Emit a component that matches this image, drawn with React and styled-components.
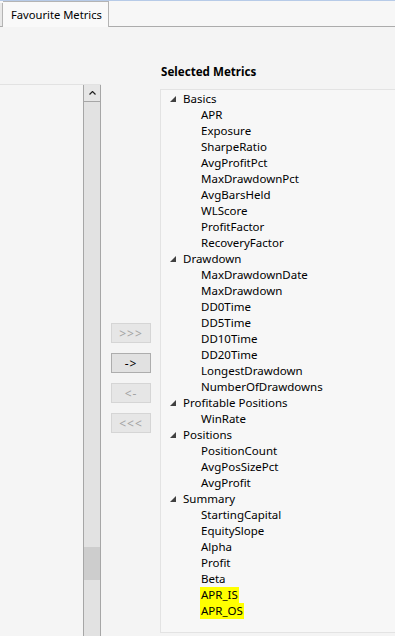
import React from 'react';
import styled, { createGlobalStyle } from 'styled-components';

const GlobalStyle = createGlobalStyle`
  html, body, #root {
    height: 100%;
    margin: 0;
  }
  body {
    background: #f4f4f4;
    font-family: "Noto Sans", "Open Sans", sans-serif;
    font-size: 11.5px;
    color: #000;
    overflow: hidden;
  }
`;

const Page = styled.div`
  height: 100%;
  display: flex;
  flex-direction: column;
`;

const TabStrip = styled.div`
  display: flex;
  height: 27px;
  box-sizing: border-box;
  border-top: 1px solid #b7cbe8;
  background: #f7f7f7;
`;

const TabStub = styled.div`
  width: 2px;
  margin-top: 2px;
  border-right: 1px solid #b4b4b4;
  border-bottom: 1px solid #acacac;
  background: #e8e8e8;
`;

const Tab = styled.div`
  width: 106px;
  box-sizing: border-box;
  border: 1px solid #b4b4b4;
  border-left: none;
  border-bottom: none;
  background: #f9f9f9;
  display: flex;
  align-items: center;
  padding-left: 8px;
  white-space: nowrap;
  font-size: 11.2px;
`;

const TabFiller = styled.div`
  flex: 1;
  border-bottom: 1px solid #acacac;
`;

const Body = styled.div`
  flex: 1;
  display: grid;
  grid-template-columns: 101px 40px 1fr;
  column-gap: 10px;
  min-height: 0;
`;

const LeftColumn = styled.div`
  padding-top: 57px;
  display: flex;
  min-height: 0;
`;

const ListBox = styled.div`
  flex: 1;
  display: flex;
  justify-content: flex-end;
  border-top: 1px solid #e2e2e2;
  background: #f5f5f5;
`;

const ScrollBar = styled.div`
  width: 16px;
  display: flex;
  flex-direction: column;
  border-left: 1px solid #a6a6a6;
  border-right: 1px solid #a6a6a6;
  background: #e2e2e2;
`;

const ScrollButton = styled.div`
  height: 16px;
  border-bottom: 1px solid #a6a6a6;
  background: #e6e6e6;
  display: flex;
  align-items: center;
  justify-content: center;
`;

const ScrollThumb = styled.div`
  height: 33px;
  margin-top: 445px;
  background: #cdcdcd;
`;

const ButtonColumn = styled.div`
  padding-top: 296px;
  display: flex;
  flex-direction: column;
  gap: 10px;
`;

const MoveButton = styled.div`
  height: 20px;
  box-sizing: border-box;
  border: 1px solid ${p => (p.$enabled ? '#adadad' : '#d5d5d5')};
  background: ${p => (p.$enabled ? '#e1e1e1' : '#e6e6e6')};
  color: ${p => (p.$enabled ? '#000' : '#a3a3a3')};
  display: flex;
  align-items: center;
  justify-content: center;
  font-size: 12px;
  letter-spacing: 1px;
`;

const RightColumn = styled.div`
  display: flex;
  flex-direction: column;
  padding-top: 37px;
  padding-bottom: 3px;
  margin-left: -1px;
  min-height: 0;
`;

const PanelTitle = styled.div`
  height: 16px;
  line-height: 16px;
  font-weight: bold;
  font-size: 11.6px;
  margin-bottom: 9px;
  padding-left: 1px;
`;

const TreeBox = styled.div`
  flex: 1;
  border: 1px solid #e3e3e3;
  border-right: none;
  background: #f7f7f7;
  padding-top: 1px;
  overflow: hidden;
`;

const Row = styled.div`
  height: 16px;
  line-height: 16px;
  display: flex;
  align-items: center;
  padding-left: ${p => (p.$child ? 40 : 9)}px;
  white-space: nowrap;
`;

const Expander = styled.svg`
  width: 6px;
  height: 6px;
  margin-right: 7px;
  flex: none;
`;

const Label = styled.span`
  padding: 0 1px;
  margin-left: -1px;
  background: ${p => (p.$marked ? '#ffff00' : 'transparent')};
`;

const tree = [
  ['Basics', ['APR', 'Exposure', 'SharpeRatio', 'AvgProfitPct', 'MaxDrawdownPct', 'AvgBarsHeld', 'WLScore', 'ProfitFactor', 'RecoveryFactor']],
  ['Drawdown', ['MaxDrawdownDate', 'MaxDrawdown', 'DD0Time', 'DD5Time', 'DD10Time', 'DD20Time', 'LongestDrawdown', 'NumberOfDrawdowns']],
  ['Profitable Positions', ['WinRate']],
  ['Positions', ['PositionCount', 'AvgPosSizePct', 'AvgProfit']],
  ['Summary', ['StartingCapital', 'EquitySlope', 'Alpha', 'Profit', 'Beta', 'APR_IS', 'APR_OS']],
];

const marked = ['APR_IS', 'APR_OS'];

export default function App() {
  return (
    <Page>
      <GlobalStyle />
      <TabStrip>
        <TabStub />
        <Tab>Favourite Metrics</Tab>
        <TabFiller />
      </TabStrip>
      <Body>
        <LeftColumn>
          <ListBox>
            <ScrollBar>
              <ScrollButton>
                <svg width="7" height="4" viewBox="0 0 7 4">
                  <path d="M0.5 3.5 L3.5 0.5 L6.5 3.5" fill="none" stroke="#222" strokeWidth="1.2" />
                </svg>
              </ScrollButton>
              <ScrollThumb />
            </ScrollBar>
          </ListBox>
        </LeftColumn>
        <ButtonColumn>
          <MoveButton>&gt;&gt;&gt;</MoveButton>
          <MoveButton $enabled>-&gt;</MoveButton>
          <MoveButton>&lt;-</MoveButton>
          <MoveButton>&lt;&lt;&lt;</MoveButton>
        </ButtonColumn>
        <RightColumn>
          <PanelTitle>Selected Metrics</PanelTitle>
          <TreeBox>
            {tree.map(([group, items]) => (
              <React.Fragment key={group}>
                <Row>
                  <Expander viewBox="0 0 6 6">
                    <path d="M6 0 L6 6 L0 6 Z" fill="#404040" />
                  </Expander>
                  <span>{group}</span>
                </Row>
                {items.map(item => (
                  <Row $child key={item}>
                    <Label $marked={marked.includes(item)}>{item}</Label>
                  </Row>
                ))}
              </React.Fragment>
            ))}
          </TreeBox>
        </RightColumn>
      </Body>
    </Page>
  );
}
